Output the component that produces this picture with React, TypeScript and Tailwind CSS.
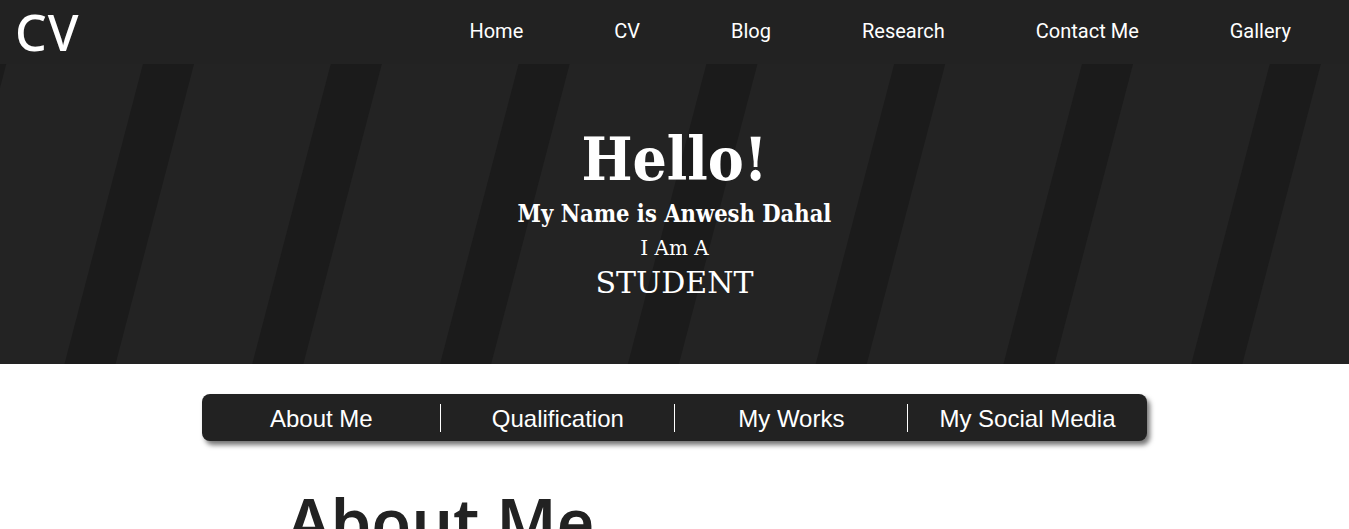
import React from "react";

const stripes = Array.from({ length: 9 }, (_, i) => -1 + i);

function Stripes() {
  return (
    <svg
      className="absolute inset-0 h-full w-full"
      viewBox="0 0 1349 300"
      preserveAspectRatio="none"
      aria-hidden="true"
    >
      {stripes.map((i) => {
        const x = 143 + 187.8 * i;
        return (
          <polygon
            key={i}
            points={`${x},0 ${x + 51},0 ${x + 51 - 78.5},300 ${x - 78.5},300`}
            fill="#1b1b1b"
          />
        );
      })}
    </svg>
  );
}

const navItems = ["Home", "CV", "Blog", "Research", "Contact Me", "Gallery"];
const tabs = [
  { t: "About Me", w: "w-[238px]" },
  { t: "Qualification", w: "w-[233px]" },
  { t: "My Works", w: "w-[232px]" },
  { t: "My Social Media", w: "flex-1" },
];

export default function App() {
  return (
    <div className="min-h-screen bg-white">
      <header className="flex h-16 items-center justify-between bg-[#222222] pl-[15px] pr-[58px]">
        <div className="font-['Noto_Sans',sans-serif] text-[50px] font-medium leading-none tracking-[1px] text-white">
          CV
        </div>
        <nav className="flex items-center gap-[91px] font-['Roboto',sans-serif] text-[20px] text-white">
          {navItems.map((n) => (
            <a key={n} className="-mt-[2px] leading-none">
              {n}
            </a>
          ))}
        </nav>
      </header>

      <section className="relative h-[300px] overflow-hidden bg-[#232323]">
        <Stripes />
        <div className="relative flex flex-col items-center pt-[65px] font-['DejaVu_Serif',serif] text-white">
          <h1 className="font-['DejaVu_Serif_Condensed','DejaVu_Serif',serif] text-[60px] font-bold leading-none">
            Hello!
          </h1>
          <p className="mt-[14px] font-['DejaVu_Serif_Condensed','DejaVu_Serif',serif] text-[23.5px] font-bold leading-none">
            My Name is Anwesh Dahal
          </p>
          <p className="mt-[11px] text-[20px] leading-none">I Am A</p>
          <p className="mt-[10px] text-[30px] leading-none">STUDENT</p>
        </div>
      </section>

      <section className="pt-[30px]">
        <div className="mx-auto flex h-[47px] w-[70%] items-center rounded-lg bg-[#222222] shadow-[3px_4px_5px_rgba(0,0,0,0.55)]">
          {tabs.map((t, i) => (
            <React.Fragment key={t.t}>
              {i > 0 && <div className="h-[28px] w-px bg-white" />}
              <div
                className={`${t.w} flex justify-center pt-[2px] font-['Liberation_Sans',Arial,sans-serif] text-[24px] leading-none text-white`}
              >
                {t.t}
              </div>
            </React.Fragment>
          ))}
        </div>
        <h2 className="ml-[287px] mt-[48px] font-['Noto_Sans',sans-serif] text-[65px] font-semibold leading-none text-[#222222]">
          About Me
        </h2>
      </section>
    </div>
  );
}
